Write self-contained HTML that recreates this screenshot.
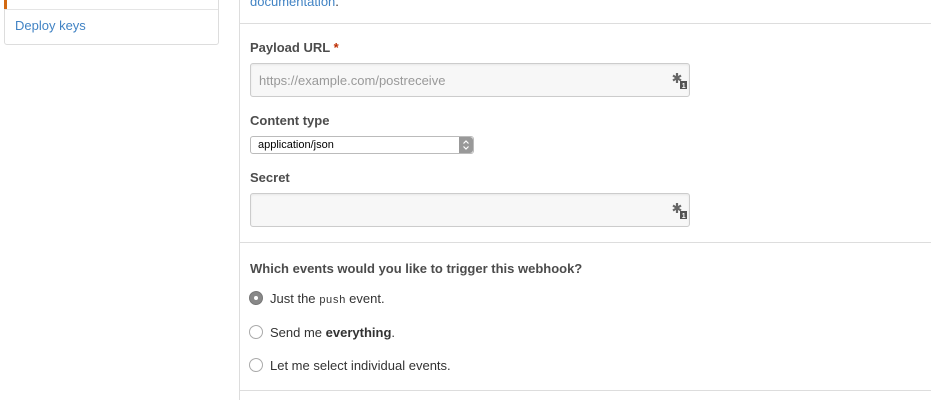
<!DOCTYPE html>
<html><head><style>
body{margin:0;width:931px;height:400px;background:#fff;font-family:"Liberation Sans",sans-serif;font-size:13px;color:#333;position:relative;overflow:hidden}
.a{position:absolute}
.lbl{font-weight:bold;font-size:13px;color:#4c4c4c}
.inp{position:absolute;left:250px;width:438px;height:32px;border:1px solid #ccc;border-radius:3px;background:#f7f7f7;box-shadow:inset 0 1px 2px rgba(0,0,0,.07)}
.ic{position:absolute;right:1px;top:8px;width:16px;height:18px}
.radio{position:absolute;left:249px;width:12px;height:12px;border:1px solid #aaa;border-radius:50%;background:#fff}
.rt{position:absolute;left:270px;font-size:13px;color:#333}
</style></head><body>
<div class="a" style="left:4px;top:-5px;width:213px;height:48px;border:1px solid #ddd;border-radius:3px"></div>
<div class="a" style="left:4px;top:0;width:3px;height:9px;background:#d26911"></div>
<div class="a" style="left:5px;top:9px;width:213px;height:1px;background:#e5e5e5"></div>
<div class="a" style="left:15px;top:18px;color:#4183c4;font-size:13px">Deploy keys</div>
<div class="a" style="left:239px;top:0;width:1px;height:400px;background:#ddd"></div>
<div class="a" style="left:250px;top:-6px;color:#4183c4;font-size:13px">documentation<span style="color:#333">.</span></div>
<div class="a" style="left:240px;top:23px;width:691px;height:1px;background:#ddd"></div>
<div class="a lbl" style="left:250px;top:40px">Payload URL <span style="color:#bd2c00">*</span></div>
<div class="inp" style="top:63px"><span class="a" style="left:8px;top:9px;color:#999;font-size:13px">https://example.com/postreceive</span>
<svg class="ic" viewBox="0 0 16 18"><path d="M5 1v10M1 3.5l8 5M9 3.5l-8 5" stroke="#666" stroke-width="2.2"/><rect x="8" y="9" width="7" height="8" fill="#555"/><text x="9.8" y="16" font-size="7" fill="#fff" font-weight="bold" font-family="Liberation Sans">1</text></svg></div>
<div class="a lbl" style="left:250px;top:113px">Content type</div>
<div class="a" style="left:250px;top:136px;width:222px;height:16px;border:1px solid #bbb;border-radius:3px;background:#fff;font-size:11px;color:#000;line-height:16px"><span style="padding-left:7px">application/json</span>
<div class="a" style="right:0;top:0;width:14px;height:16px;background:#999;border-radius:0 3px 3px 0"><svg width="14" height="16" viewBox="0 0 14 16"><path d="M4.5 6.5L7 4l2.5 2.5M4.5 9.5L7 12l2.5-2.5" stroke="#fff" fill="none" stroke-width="1.2"/></svg></div></div>
<div class="a lbl" style="left:250px;top:170px">Secret</div>
<div class="inp" style="top:193px"><svg class="ic" viewBox="0 0 16 18"><path d="M5 1v10M1 3.5l8 5M9 3.5l-8 5" stroke="#666" stroke-width="2.2"/><rect x="8" y="9" width="7" height="8" fill="#555"/><text x="9.8" y="16" font-size="7" fill="#fff" font-weight="bold" font-family="Liberation Sans">1</text></svg></div>
<div class="a" style="left:240px;top:242px;width:691px;height:1px;background:#ddd"></div>
<div class="a lbl" style="left:250px;top:261px">Which events would you like to trigger this webhook?</div>
<div class="radio" style="top:291px;background:#888;border-color:#777"><div class="a" style="left:4px;top:4px;width:4px;height:4px;border-radius:50%;background:#fff"></div></div>
<div class="rt" style="top:291px">Just the <span style="font-family:'Liberation Mono',monospace;font-size:11px">push</span> event.</div>
<div class="radio" style="top:325px"></div>
<div class="rt" style="top:325px">Send me <b>everything</b>.</div>
<div class="radio" style="top:358px"></div>
<div class="rt" style="top:358px">Let me select individual events.</div>
<div class="a" style="left:240px;top:390px;width:691px;height:1px;background:#ddd"></div>
</body></html>
